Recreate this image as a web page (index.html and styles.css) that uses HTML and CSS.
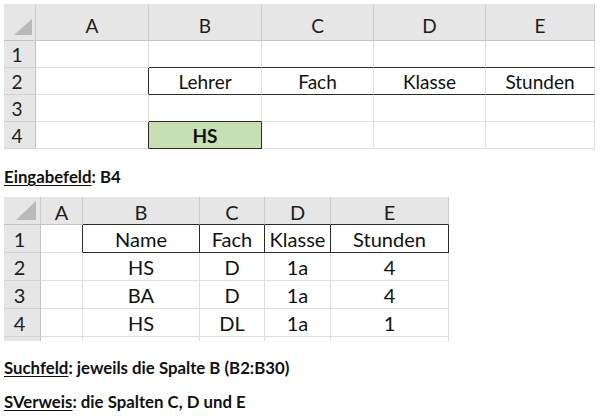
FILE: index.html
```html
<!DOCTYPE html>
<html lang="de">
<head>
<meta charset="utf-8">
<title>SVerweis</title>
<link rel="stylesheet" href="styles.css">
</head>
<body>
<div class="page">
  <div class="sheet sheet1">
    <div class="hd corner"></div>
    <div class="hd col">A</div>
    <div class="hd col">B</div>
    <div class="hd col">C</div>
    <div class="hd col">D</div>
    <div class="hd col">E</div>

    <div class="hd row">1</div>
    <div class="c"></div>
    <div class="c db"></div>
    <div class="c db"></div>
    <div class="c db"></div>
    <div class="c db"></div>

    <div class="hd row">2</div>
    <div class="c dr"></div>
    <div class="c db">Lehrer</div>
    <div class="c db">Fach</div>
    <div class="c db">Klasse</div>
    <div class="c db">Stunden</div>

    <div class="hd row">3</div>
    <div class="c"></div>
    <div class="c db"></div>
    <div class="c"></div>
    <div class="c"></div>
    <div class="c"></div>

    <div class="hd row">4</div>
    <div class="c dr"></div>
    <div class="c dr db input">HS</div>
    <div class="c"></div>
    <div class="c"></div>
    <div class="c"></div>
  </div>

  <p class="note note1"><u>Eingabefeld</u>: B4</p>

  <div class="sheet sheet2">
    <div class="hd corner"></div>
    <div class="hd col">A</div>
    <div class="hd col db">B</div>
    <div class="hd col db">C</div>
    <div class="hd col db">D</div>
    <div class="hd col db">E</div>

    <div class="hd row">1</div>
    <div class="c dr"></div>
    <div class="c dr db">Name</div>
    <div class="c dr db">Fach</div>
    <div class="c dr db">Klasse</div>
    <div class="c dr db">Stunden</div>

    <div class="hd row">2</div>
    <div class="c"></div>
    <div class="c">HS</div>
    <div class="c">D</div>
    <div class="c">1a</div>
    <div class="c">4</div>

    <div class="hd row">3</div>
    <div class="c"></div>
    <div class="c">BA</div>
    <div class="c">D</div>
    <div class="c">1a</div>
    <div class="c">4</div>

    <div class="hd row">4</div>
    <div class="c"></div>
    <div class="c">HS</div>
    <div class="c">DL</div>
    <div class="c">1a</div>
    <div class="c">1</div>

    <div class="hd row stub"></div>
    <div class="c stub"></div>
    <div class="c stub"></div>
    <div class="c stub"></div>
    <div class="c stub"></div>
    <div class="c stub"></div>
  </div>

  <p class="note note2"><u>Suchfeld</u>: jeweils die Spalte B (B2:B30)</p>
  <p class="note note3"><u>SVerweis</u>: die Spalten C, D und E</p>
</div>
</body>
</html>
```

FILE: styles.css
```css
* { box-sizing: border-box; }

html, body {
  margin: 0;
  padding: 0;
  background: #ffffff;
}

.page {
  width: 600px;
  height: 416px;
  padding: 4px 0 0 4px;
  display: flex;
  flex-direction: column;
  align-items: flex-start;
  font-family: Lato, "Liberation Sans", sans-serif;
  color: #111111;
}

.sheet {
  display: grid;
}

.sheet1 {
  font-size: 19px;
  grid-template-columns: 32px 113px 113px 112px 112px 109px;
  grid-template-rows: 37px 27px 27px 27px 27px;
}

.sheet2 {
  font-size: 20px;
  margin-top: 10px;
  grid-template-columns: 37px 42px 117px 65px 66px 118px;
  grid-template-rows: 28px 28px 28px 28px 28px 4px;
}

.hd {
  background: #e6e6e6;
  color: #1e1e1e;
  display: flex;
  align-items: center;
  justify-content: center;
  border-right: 1px solid #cdcdcd;
  border-bottom: 1px solid #c4c4c4;
}

.hd.col {
  padding-top: 6px;
}

.sheet2 .hd.col {
  padding-top: 2px;
}

.hd.row {
  padding-right: 5px;
  border-right: 1px solid #c4c4c4;
  border-bottom: 1px solid #d2d2d2;
}

.corner {
  position: relative;
}

.corner::after {
  content: "";
  position: absolute;
  right: 3px;
  bottom: 5px;
  width: 18px;
  height: 16px;
  background: #b9b9b9;
  clip-path: polygon(100% 0, 100% 100%, 0 100%);
}

.sheet2 .corner::after {
  right: 4px;
  bottom: 4px;
  width: 20px;
  height: 19px;
}

.c {
  display: flex;
  align-items: center;
  justify-content: center;
  border-right: 1px solid #dedede;
  border-bottom: 1px solid #dedede;
  padding-top: 1px;
}

.c.db, .hd.db { border-bottom-color: #2b2b2b; }
.c.dr { border-right-color: #2b2b2b; }

.input {
  background: #c6e0b4;
  font-weight: 700;
}

.stub {
  border-bottom: none;
}

.hd.row.stub {
  border-bottom: none;
}

.note {
  margin: 0;
  font-weight: 700;
  font-size: 16.8px;
  line-height: 20px;
  color: #111111;
}

.note u {
  text-decoration-thickness: 1px;
  text-underline-offset: 2px;
}

.note1 { margin-top: 18px; }
.note2 { margin-top: 17px; }
.note3 { margin-top: 14px; }
```
